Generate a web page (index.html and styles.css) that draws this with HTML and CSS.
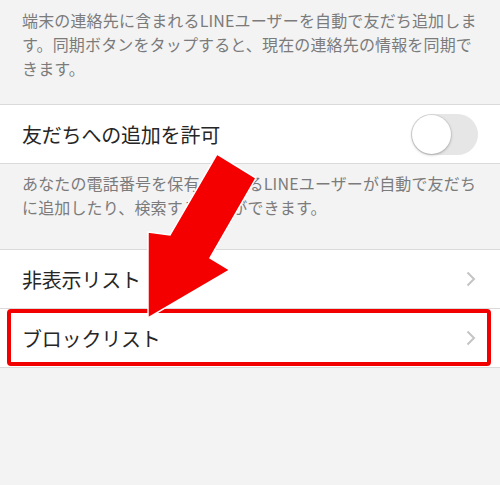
FILE: index.html
```html
<!DOCTYPE html>
<html lang="ja">
<head>
<meta charset="utf-8">
<link rel="stylesheet" href="styles.css">
</head>
<body>
<div class="page">
  <p class="desc desc-top">端末の連絡先に含まれるLINEユーザーを自動で友だち追加しま<br>す。同期ボタンをタップすると、現在の連絡先の情報を同期で<br>きます。</p>
  <div class="group">
    <div class="row">
      <span class="label">友だちへの追加を許可</span>
      <span class="toggle"><span class="knob"></span></span>
    </div>
  </div>
  <p class="desc desc-mid">あなたの電話番号を保有しているLINEユーザーが自動で友だち<br>に追加したり、検索することができます。</p>
  <div class="group">
    <div class="row">
      <span class="label">非表示リスト</span>
      <svg class="chev" width="10" height="16" viewBox="0 0 10 16"><polyline points="1.5,1.5 8,8 1.5,14.5" fill="none" stroke="#c4c4c6" stroke-width="2"/></svg>
    </div>
    <div class="row">
      <span class="label">ブロックリスト</span>
      <svg class="chev" width="10" height="16" viewBox="0 0 10 16"><polyline points="1.5,1.5 8,8 1.5,14.5" fill="none" stroke="#c4c4c6" stroke-width="2"/></svg>
    </div>
  </div>
  <div class="highlight"></div>
  <svg class="arrow" width="500" height="485" viewBox="0 0 500 485">
    <polygon points="217,154 256,178 210,258 230,270 148,318 148,232 170,235" fill="#f50000" stroke="#ffffff" stroke-width="1.5" stroke-linejoin="miter"/>
  </svg>
</div>
</body>
</html>
```
FILE: styles.css
```css
html, body {
  margin: 0;
  padding: 0;
}
body {
  background: #f3f3f3;
  font-family: "Noto Sans CJK JP", "Noto Sans", sans-serif;
  width: 500px;
  height: 485px;
  overflow: hidden;
}
.page {
  position: relative;
  width: 500px;
  height: 485px;
}
.desc {
  margin: 0;
  padding: 0 22px;
  color: #7b7b7b;
  font-size: 16px;
  line-height: 24px;
  letter-spacing: 0.15px;
}
.desc-top {
  padding-top: 8px;
  padding-bottom: 24px;
  height: 72px;
}
.desc-mid {
  padding-top: 7px;
  padding-bottom: 30px;
  height: 48px;
}
.group {
  background: #ffffff;
  border-top: 1px solid #dadada;
}
.row {
  height: 58px;
  border-bottom: 1px solid #dadada;
  display: flex;
  align-items: center;
  justify-content: space-between;
  padding: 0 22px;
}
.label {
  font-size: 20px;
  color: #262626;
  letter-spacing: -0.2px;
}
.toggle {
  width: 67px;
  height: 41px;
  border-radius: 21px;
  background: #e6e6e6;
  position: relative;
  box-sizing: border-box;
}
.knob {
  position: absolute;
  left: 1px;
  top: 1px;
  width: 39px;
  height: 39px;
  border-radius: 50%;
  background: #ffffff;
  box-shadow: 0 1px 3px rgba(0,0,0,0.25), 0 0 0 1px rgba(0,0,0,0.05);
}
.chev {
  margin-right: 2px;
}
.highlight {
  position: absolute;
  left: 7px;
  top: 309px;
  width: 484px;
  height: 57px;
  box-sizing: border-box;
  border: 4px solid #f20000;
  border-radius: 4px;
}
.arrow {
  position: absolute;
  left: 0;
  top: 0;
}
```
